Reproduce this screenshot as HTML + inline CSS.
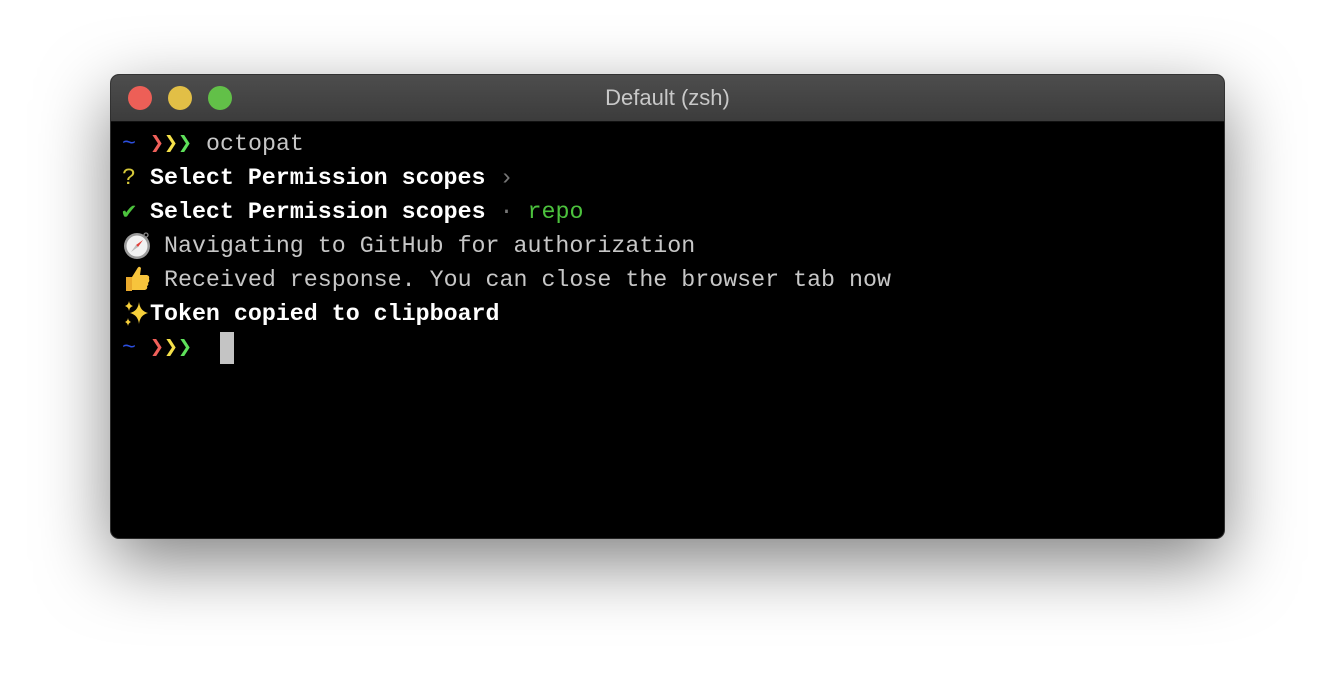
<!DOCTYPE html>
<html><head><meta charset="utf-8"><style>
html,body{margin:0;padding:0;background:#fff;width:1336px;height:686px;overflow:hidden}
.win{position:absolute;left:111px;top:75px;width:1113px;height:463px;border-radius:8px;background:#000;box-shadow:0 24px 70px rgba(0,0,0,0.5),0 0 0 1px #3a3a3a;overflow:hidden}
.tb{position:absolute;left:0;top:0;right:0;height:46px;background:linear-gradient(#4d4d4d,#3c3c3c);border-bottom:1px solid #111}
.dot{position:absolute;top:11px;width:24px;height:24px;border-radius:50%}
.title{position:absolute;left:0;right:0;top:0;height:46px;font:22px/46px "Liberation Sans",sans-serif;text-align:center;color:#c8c8c8}
.term{position:absolute;left:11px;top:52px;font:23.3px/34px "Liberation Mono",monospace;color:#c7c7c7}
.l{height:34px;position:relative;white-space:pre}
b{color:#fff;font-weight:bold}
.e{display:inline-block;width:28px;height:34px;vertical-align:top;position:relative}
.e svg{position:absolute;left:0;top:1px}
.cur{display:inline-block;width:14px;height:32px;background:#c4c4c4;vertical-align:top;margin-top:1px}
</style></head><body>
<div class="win">
<div class="tb">
<div class="dot" style="left:17px;background:#ed5f57"></div>
<div class="dot" style="left:57px;background:#e2bf46"></div>
<div class="dot" style="left:97px;background:#62c048"></div>
<div class="title">Default (zsh)</div>
</div>
<div class="term"><div class="l"><span style="color:#2c4fe0">~</span> <span style="color:#f0605a">❯</span><span style="color:#f5e14a">❯</span><span style="color:#5ee05a">❯</span> octopat</div><div class="l"><span style="color:#d7c93a">?</span> <b>Select Permission scopes</b> <span style="color:#777">›</span></div><div class="l"><span style="color:#4cc23d">✔</span> <b>Select Permission scopes</b> <span style="color:#777">·</span> <span style="color:#4cc23d">repo</span></div><div class="l"><span class="e"><svg width="30" height="30" viewBox="0 0 30 30"><circle cx="15" cy="16" r="13" fill="#9a9a9a"/><circle cx="15" cy="16" r="10.5" fill="#f2f2f2"/><circle cx="24" cy="5" r="2" fill="none" stroke="#888" stroke-width="1.3"/><path d="M21 10 L16 17 L14 15 Z" fill="#e0403a"/><path d="M9 22 L14 15 L16 17 Z" fill="#bbb"/></svg></span> Navigating to GitHub for authorization</div><div class="l"><span class="e"><svg width="30" height="30" viewBox="0 0 30 30"><path d="M4 13 h6 v14 h-6 z" fill="#e9a92c"/><path d="M10 13 L15 5 Q17 1 19 4 L18 11 L25 11 Q28 12 27 15 Q28 17 26 19 Q27 21 25 22 Q26 25 23 26 L10 26 Z" fill="#f7c43c"/></svg></span> Received response. You can close the browser tab now</div><div class="l"><span class="e"><svg width="30" height="30" viewBox="0 0 30 30"><path d="M17 4 Q18 13 26 15 Q18 17 17 26 Q16 17 8 15 Q16 13 17 4Z" fill="#f6cf3a"/><path d="M7 3 Q7.6 7 11 8 Q7.6 9 7 13 Q6.4 9 3 8 Q6.4 7 7 3Z" fill="#f6cf3a"/><path d="M6 20 Q6.4 23 9 24 Q6.4 25 6 28 Q5.6 25 3 24 Q5.6 23 6 20Z" fill="#f6cf3a"/></svg></span><b>Token copied to clipboard</b></div><div class="l"><span style="color:#2c4fe0">~</span> <span style="color:#f0605a">❯</span><span style="color:#f5e14a">❯</span><span style="color:#5ee05a">❯</span>  <span class="cur"></span></div></div>
</div>
</body></html>
